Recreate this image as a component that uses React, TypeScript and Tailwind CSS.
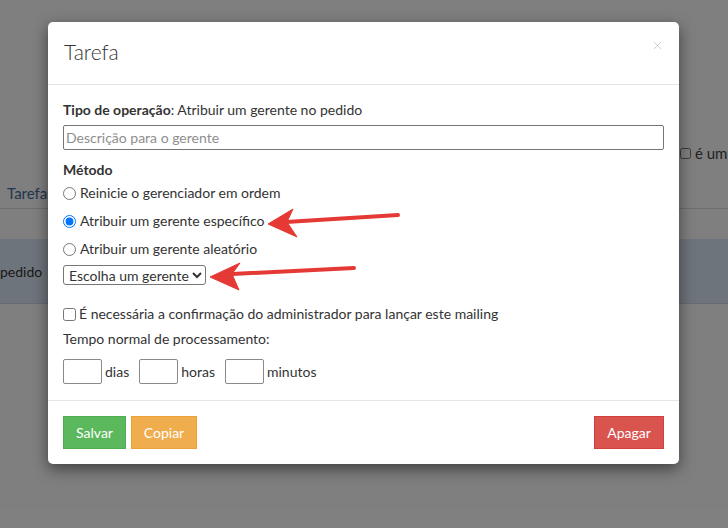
import { X } from "lucide-react";

function Radio({ label, checked }: { label: string; checked?: boolean }) {
  return (
    <label className="flex h-5 items-center gap-[4px]">
      <input type="radio" name="metodo" defaultChecked={checked} className="m-0 h-[13px] w-[13px]" />
      <span>{label}</span>
    </label>
  );
}

function SmallInput({ unit }: { unit: string }) {
  return (
    <div className="flex items-center gap-[3px]">
      <input type="text" className="h-[25px] w-[39px] rounded-[2px] border border-[#8a8a8a]" />
      <span>{unit}</span>
    </div>
  );
}

export default function App() {
  return (
    <div className="relative h-[528px] w-full overflow-hidden bg-white font-['Lato',sans-serif] text-[14px] text-[#333]">
      {/* page behind the dialog */}
      <div className="pt-[143px]">
        <div className="flex h-5 justify-end">
          <div className="flex w-[49px] items-center gap-[4px] whitespace-nowrap pl-[1px] text-[15px]">
            <input type="checkbox" className="m-0 h-[13px] w-[11px] shrink-0" />
            <span className="text-[#444]">é um</span>
          </div>
        </div>
        <div className="mt-[16px] h-[30px] border-b border-[#ddd] pl-[7px] pt-[4px] text-[15px] leading-5 text-[#3e6d9c]">
          Tarefas
        </div>
        <div className="mt-[30px] flex h-[65px] items-center border-b border-[#cfd8e0] bg-[#dce9f6] text-[#333]">
          <span>pedido</span>
        </div>
      </div>

      {/* backdrop + dialog */}
      <div className="absolute inset-0 bg-black/50 pt-[22px]">
        <div className="ml-[48px] w-[631px] rounded-[5px] bg-white shadow-[0_5px_15px_rgba(0,0,0,0.5)]">
          <div className="flex items-start justify-between border-b border-[#e5e5e5] pb-[20px] pl-[16px] pr-[15px] pt-[18px]">
            <h4 className="text-[21px] font-light leading-[24px] text-[#333]">Tarefa</h4>
            <X className="mt-[-1px] h-[13px] w-[13px] text-[#c6c6c6]" strokeWidth={1.5} />
          </div>

          <div className="flex flex-col px-[15px] pb-[16px] pt-[15px] leading-5">
            <p>
              <b className="font-bold">Tipo de operação</b>: Atribuir um gerente no pedido
            </p>
            <input
              type="text"
              placeholder="Descrição para o gerente"
              className="mt-[5px] h-[25px] w-full rounded-[2px] border border-[#767676] px-[2px] placeholder:text-[#8e8e8e]"
            />
            <p className="mt-[10px] font-bold">Método</p>
            <div className="mt-[3px] flex flex-col gap-[8px]">
              <Radio label="Reinicie o gerenciador em ordem" />
              <Radio label="Atribuir um gerente específico" checked />
              <Radio label="Atribuir um gerente aleatório" />
            </div>
            <div className="mt-[6px]">
              <select className="h-[20px] rounded-[3px] border border-[#767676] pl-[1px] leading-4">
                <option>Escolha um gerente</option>
              </select>
            </div>
            <label className="mt-[18px] flex h-5 items-center gap-[3px]">
              <input type="checkbox" className="m-0 h-[13px] w-[13px]" />
              <span>É necessária a confirmação do administrador para lançar este mailing</span>
            </label>
            <p className="mt-[5px]">Tempo normal de processamento:</p>
            <div className="mt-[10px] flex items-center gap-[10px]">
              <SmallInput unit="dias" />
              <SmallInput unit="horas" />
              <SmallInput unit="minutos" />
            </div>
          </div>

          <div className="flex items-center justify-between border-t border-[#e5e5e5] p-[15px] text-white">
            <div className="flex gap-[5px]">
              <button className="h-[33px] w-[63px] border border-[#4cae4c] bg-[#5cb85c]">Salvar</button>
              <button className="h-[33px] w-[66px] border border-[#eea236] bg-[#f0ad4e]">Copiar</button>
            </div>
            <button className="h-[33px] w-[70px] border border-[#d43f3a] bg-[#d9534f]">Apagar</button>
          </div>
        </div>
      </div>

      {/* red annotation arrows */}
      <svg className="pointer-events-none absolute inset-0" width="728" height="528" viewBox="0 0 728 528">
        <g fill="#e53935" stroke="#e53935">
          <line x1="398" y1="215" x2="286" y2="222" strokeWidth="4" strokeLinecap="round" />
          <polygon points="268,224 293,209 287,222 297,237" strokeWidth="1" strokeLinejoin="round" />
          <line x1="354" y1="268" x2="232" y2="274" strokeWidth="4" strokeLinecap="round" />
          <polygon points="210,277 240,263 232,274 239,290" strokeWidth="1" strokeLinejoin="round" />
        </g>
      </svg>
    </div>
  );
}
